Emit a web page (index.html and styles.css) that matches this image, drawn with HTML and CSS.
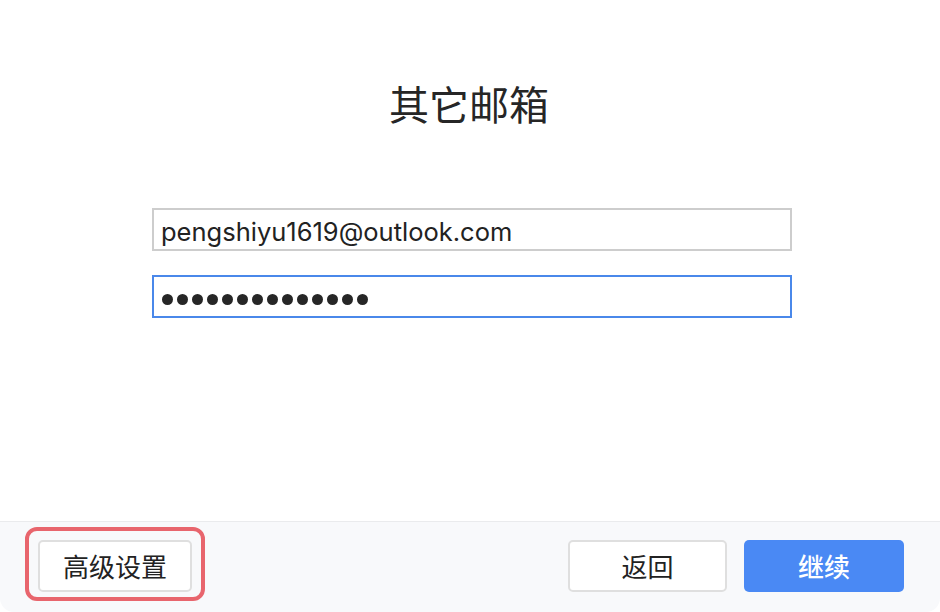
FILE: index.html
```html
<!DOCTYPE html>
<html lang="zh-CN">
<head>
<meta charset="utf-8">
<title>其它邮箱</title>
<link rel="stylesheet" href="styles.css">
</head>
<body>
<div class="window">
  <main class="content">
    <h1 class="title">其它邮箱</h1>
    <div class="form">
      <div class="field field-text">pengshiyu1619@outlook.com</div>
      <div class="field field-focus" aria-label="密码">
        <span class="dot"></span><span class="dot"></span><span class="dot"></span><span class="dot"></span><span class="dot"></span><span class="dot"></span><span class="dot"></span><span class="dot"></span><span class="dot"></span><span class="dot"></span><span class="dot"></span><span class="dot"></span><span class="dot"></span><span class="dot"></span>
      </div>
    </div>
  </main>
  <footer class="footer">
    <div class="highlight">
      <button class="btn btn-advanced">高级设置</button>
      <span class="annotation"></span>
    </div>
    <div class="actions">
      <button class="btn btn-back">返回</button>
      <button class="btn btn-primary">继续</button>
    </div>
  </footer>
</div>
</body>
</html>
```

FILE: styles.css
```css
* {
  box-sizing: border-box;
}

html, body {
  margin: 0;
  padding: 0;
  background: #ffffff;
}

body {
  font-family: "Noto Sans CJK SC", "Noto Sans", sans-serif;
  color: #222222;
}

.window {
  width: 940px;
  height: 612px;
  display: flex;
  flex-direction: column;
  background: #ffffff;
}

.content {
  flex: 1;
  padding-top: 83px;
}

.title {
  margin: 0;
  text-align: center;
  font-size: 40px;
  line-height: 40px;
  font-weight: 400;
  color: #262626;
  padding-right: 2px;
}

.form {
  margin-top: 85px;
  padding-left: 152px;
  display: flex;
  flex-direction: column;
  gap: 24px;
}

.field {
  width: 640px;
  height: 43px;
  border: 2px solid #cdcdcd;
  padding: 0 7px;
  display: flex;
  align-items: center;
  font-family: "Inter", "Liberation Sans", sans-serif;
  font-size: 25.5px;
  color: #222222;
  background: #ffffff;
}

.field-text {
  padding-top: 3px;
}

.field-focus {
  border-color: #4a88ea;
  padding-left: 8px;
  gap: 4px;
}

.dot {
  width: 11px;
  height: 11px;
  border-radius: 50%;
  background: #262626;
  margin-top: 5px;
}

.footer {
  height: 91px;
  border-top: 1px solid #eaebed;
  background: #f8f9fb;
  border-radius: 0 0 14px 14px;
  display: flex;
  justify-content: space-between;
  align-items: flex-start;
  padding: 18px 36px 0 38px;
}

.highlight {
  position: relative;
}

.annotation {
  position: absolute;
  left: -13px;
  top: -13px;
  right: -13px;
  bottom: -9px;
  border: 4.5px solid #e8656d;
  border-radius: 12px;
  pointer-events: none;
}

.actions {
  display: flex;
  gap: 17px;
}

.btn {
  height: 52px;
  border-radius: 5px;
  border: 2px solid #dfdfdf;
  background: #ffffff;
  font-family: "Noto Sans CJK SC", "Noto Sans", sans-serif;
  font-size: 26px;
  line-height: 1;
  color: #222222;
  padding: 0;
  display: flex;
  align-items: center;
  justify-content: center;
}

.btn-advanced {
  width: 154px;
}

.btn-back {
  width: 159px;
}

.btn-primary {
  width: 160px;
  border: none;
  background: #4a89f4;
  color: #ffffff;
  font-weight: 500;
}
```
